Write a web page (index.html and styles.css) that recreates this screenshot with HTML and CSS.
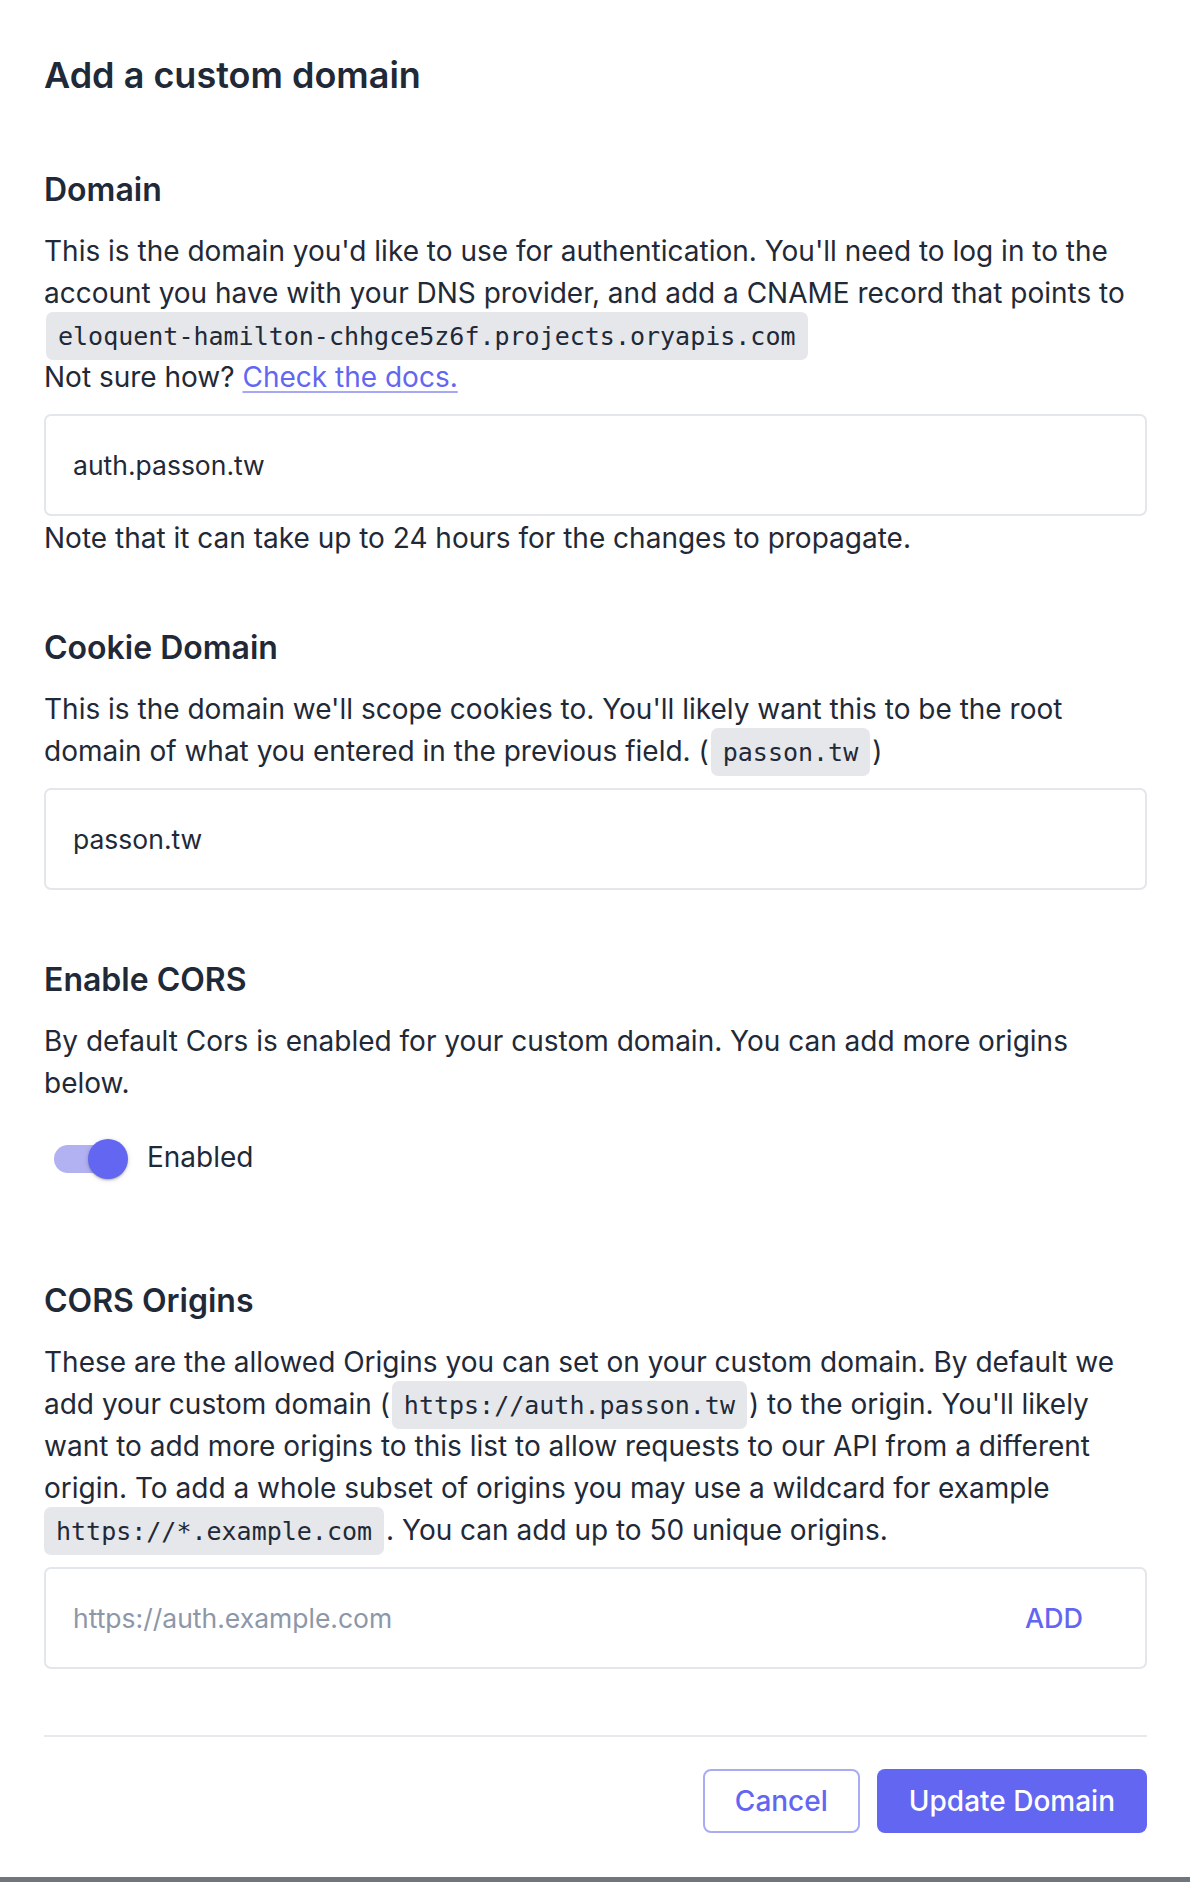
FILE: index.html
```html
<!DOCTYPE html>
<html lang="en">
<head>
<meta charset="utf-8">
<title>Add a custom domain</title>
<link rel="stylesheet" href="styles.css">
</head>
<body>
<div class="modal">
  <h1 class="title">Add a custom domain</h1>

  <section class="section section-first">
    <h2 class="heading">Domain</h2>
    <p class="desc">This is the domain you'd like to use for authentication. You'll need to log in to the account you have with your DNS provider, and add a CNAME record that points to <code class="code">eloquent-hamilton-chhgce5z6f.projects.oryapis.com</code><br>Not sure how? <a class="link" href="#">Check the docs.</a></p>
    <div class="field"><input class="field-input" type="text" value="auth.passon.tw"></div>
    <p class="desc note">Note that it can take up to 24 hours for the changes to propagate.</p>
  </section>

  <section class="section">
    <h2 class="heading">Cookie Domain</h2>
    <p class="desc">This is the domain we'll scope cookies to. You'll likely want this to be the root domain of what you entered in the previous field. (<code class="code">passon.tw</code>)</p>
    <div class="field"><input class="field-input" type="text" value="passon.tw"></div>
  </section>

  <section class="section section-cors">
    <h2 class="heading">Enable CORS</h2>
    <p class="desc">By default Cors is enabled for your custom domain. You can add more origins below.</p>
    <div class="toggle-row">
      <span class="switch"><span class="track"></span><span class="thumb"></span></span>
      <span class="toggle-label">Enabled</span>
    </div>
  </section>

  <section class="section section-origins">
    <h2 class="heading">CORS Origins</h2>
    <p class="desc">These are the allowed Origins you can set on your custom domain. By default we add your custom domain (<code class="code">https://auth.passon.tw</code>) to the origin. You'll likely want to add more origins to this list to allow requests to our API from a different origin. To add a whole subset of origins you may use a wildcard for example <code class="code code-start">https://*.example.com</code>. You can add up to 50 unique origins.</p>
    <div class="field"><input class="field-input" type="text" placeholder="https://auth.example.com"><button class="add-btn" type="button">ADD</button></div>
  </section>

  <div class="divider"></div>
  <div class="actions">
    <button class="btn btn-secondary" type="button">Cancel</button>
    <button class="btn btn-primary" type="button">Update Domain</button>
  </div>
</div>
</body>
</html>
```
FILE: styles.css
```css
html, body {
  margin: 0;
  padding: 0;
}
body {
  background: #71767e;
  font-family: Inter, "Noto Sans", "Liberation Sans", sans-serif;
  color: #1f2937;
}
.modal {
  background: #ffffff;
  padding: 55px 43px 44px 44px;
}
.title {
  margin: 0;
  font-size: 36px;
  line-height: 40px;
  font-weight: 600;
  color: #1f2937;
}
.section {
  margin-top: 68px;
}
.section-first {
  margin-top: 74px;
}
.section-cors {
  margin-top: 69px;
}
.section-origins {
  margin-top: 102px;
}
.heading {
  margin: 0 0 19px 0;
  font-size: 32px;
  line-height: 42px;
  font-weight: 600;
  color: #1f2937;
}
.desc {
  margin: 0;
  font-size: 28px;
  line-height: 42px;
  color: #1f2937;
}
.note {
  margin-top: 1px;
}
.code {
  font-family: "DejaVu Sans Mono", "Liberation Mono", monospace;
  font-size: 25px;
  line-height: 1;
  background: #e5e7eb;
  border-radius: 7px;
  padding: 10px 12px 9px 12px;
  margin: 0 2px;
  color: #1f2937;
}
.code-start {
  margin-left: 0;
}
.link {
  color: #6366f1;
  text-decoration: underline;
  text-decoration-color: #a5a8f6;
  text-decoration-thickness: 2px;
  text-underline-offset: 4px;
}
.field {
  margin-top: 16px;
  height: 102px;
  box-sizing: border-box;
  border: 2px solid #e3e6ea;
  border-radius: 7px;
  display: flex;
  align-items: center;
  background: #fff;
}
.field-input {
  flex: 1;
  min-width: 0;
  height: 100%;
  border: 0;
  outline: none;
  background: transparent;
  padding: 0 0 0 27px;
  margin: 0;
  font-family: Inter, "Noto Sans", "Liberation Sans", sans-serif;
  font-size: 26.5px;
  color: #1f2937;
}
.field-input::placeholder {
  color: #8d97a8;
}
.add-btn {
  border: 0;
  background: transparent;
  font-family: Inter, "Noto Sans", "Liberation Sans", sans-serif;
  font-size: 27px;
  font-weight: 500;
  color: #6366f1;
  padding: 0;
  margin-right: 62px;
}
.toggle-row {
  margin-top: 32px;
  height: 42px;
  display: flex;
  align-items: center;
}
.switch {
  position: relative;
  width: 74px;
  height: 40px;
  margin-left: 10px;
  margin-top: 4px;
  display: flex;
  align-items: center;
}
.track {
  width: 69px;
  height: 28px;
  border-radius: 14px;
  background: #b2b1f2;
}
.thumb {
  position: absolute;
  left: 34px;
  top: 0;
  width: 40px;
  height: 40px;
  border-radius: 50%;
  background: #6366f1;
  box-shadow: 0 2px 2px -1px rgba(0,0,0,0.2), 0 1px 3px rgba(0,0,0,0.14), 0 1px 6px rgba(0,0,0,0.1);
}
.toggle-label {
  margin-left: 19px;
  font-size: 28px;
  line-height: 42px;
  color: #1f2937;
}
.divider {
  margin-top: 66px;
  height: 2px;
  background: #e7e9ed;
}
.actions {
  margin-top: 32px;
  display: flex;
  justify-content: flex-end;
  gap: 17px;
}
.btn {
  height: 64px;
  box-sizing: border-box;
  border-radius: 8px;
  font-family: Inter, "Noto Sans", "Liberation Sans", sans-serif;
  font-size: 28px;
  font-weight: 500;
  padding: 0 30px;
  display: flex;
  align-items: center;
}
.btn-secondary {
  background: #ffffff;
  color: #6366f1;
  border: 2px solid #a9acf5;
}
.btn-primary {
  background: #6366f1;
  color: #ffffff;
  border: 0;
  padding: 0 32px;
}
```
